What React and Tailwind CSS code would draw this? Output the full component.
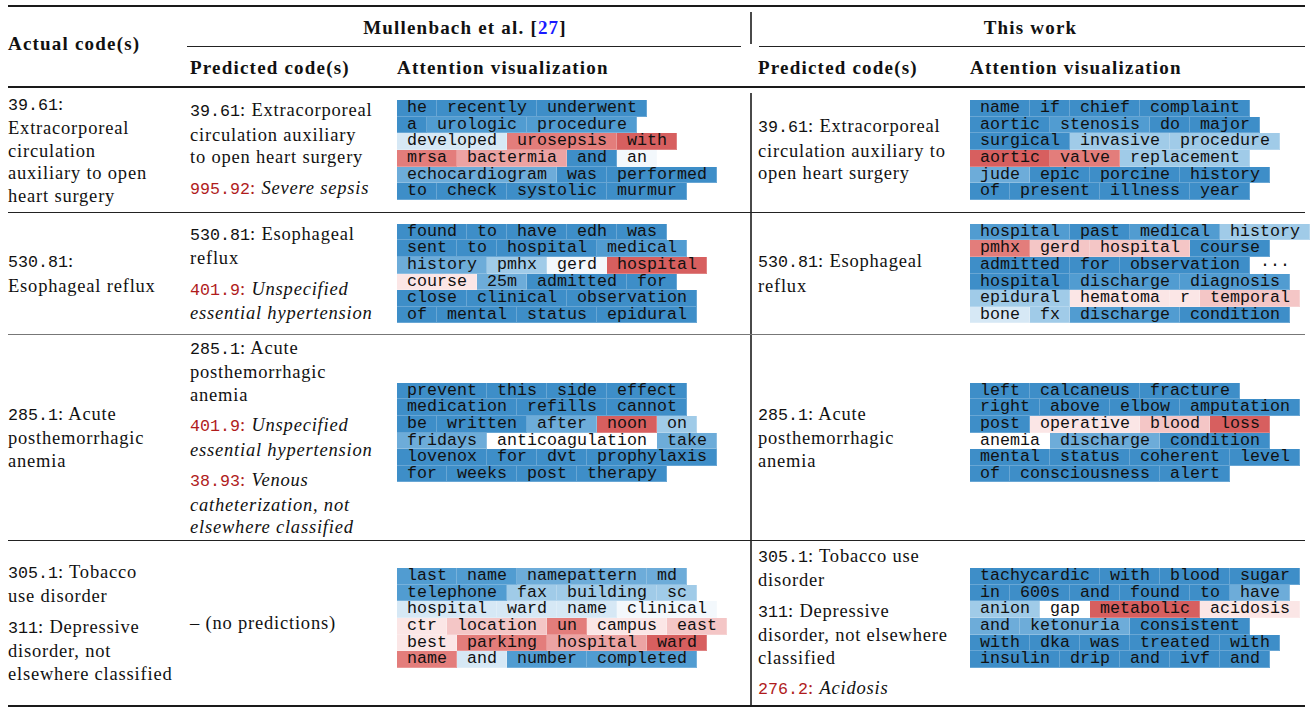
import React from 'react'

// ─── Fonts / colours ─────────────────────────────────────────
const serif = "font-['Liberation_Serif',serif]"
const mono = "font-['Liberation_Mono',monospace]"

const BG = {
  b4: 'bg-[#3e8ec8]',
  b3: 'bg-[#519cd1]',
  b2: 'bg-[#6dacd9]',
  b1: 'bg-[#a0cbe8]',
  b0: 'bg-[#d6e8f5]',
  w: 'bg-[#f3f8fc]',
  ww: 'bg-[#ffffff]',
  r0: 'bg-[#fbe6e6]',
  r1: 'bg-[#f4c6c6]',
  r2: 'bg-[#eca3a3]',
  r3: 'bg-[#e37d7b]',
  r4: 'bg-[#d75f5f]',
  no: 'bg-transparent',
}

// ─── Attention data ──────────────────────────────────────────
const ATTN = {
  m1: [
    'he:b4 recently:b4 underwent:b4',
    'a:b4 urologic:b3 procedure:b3',
    'developed:b0 urosepsis:r3 with:r4',
    'mrsa:r3 bactermia:r2 and:b4 an:w',
    'echocardiogram:b2 was:b4 performed:b4',
    'to:b4 check:b4 systolic:b4 murmur:b4',
  ],
  t1: [
    'name:b4 if:b4 chief:b4 complaint:b4',
    'aortic:b4 stenosis:b3 do:b4 major:b4',
    'surgical:b4 invasive:b1 procedure:b1',
    'aortic:r4 valve:r3 replacement:b1',
    'jude:b2 epic:b4 porcine:b4 history:b4',
    'of:b4 present:b4 illness:b4 year:b4',
  ],
  m2: [
    'found:b4 to:b4 have:b4 edh:b4 was:b4',
    'sent:b4 to:b4 hospital:b4 medical:b3',
    'history:b2 pmhx:b1 gerd:w hospital:r4',
    'course:r0 25m:b2 admitted:b4 for:b4',
    'close:b4 clinical:b4 observation:b4',
    'of:b4 mental:b4 status:b4 epidural:b4',
  ],
  t2: [
    'hospital:b3 past:b4 medical:b3 history:b1',
    'pmhx:r3 gerd:r1 hospital:r1 course:b4',
    'admitted:b4 for:b4 observation:b4 ···:no',
    'hospital:b4 discharge:b3 diagnosis:b3',
    'epidural:b1 hematoma:r0 r:r0 temporal:r1',
    'bone:b0 fx:b1 discharge:b3 condition:b4',
  ],
  m3: [
    'prevent:b4 this:b4 side:b4 effect:b4',
    'medication:b4 refills:b4 cannot:b4',
    'be:b4 written:b4 after:b2 noon:r4 on:b1',
    'fridays:b2 anticoagulation:ww take:b2',
    'lovenox:b4 for:b4 dvt:b4 prophylaxis:b4',
    'for:b4 weeks:b4 post:b4 therapy:b4',
  ],
  t3: [
    'left:b4 calcaneus:b4 fracture:b4',
    'right:b4 above:b4 elbow:b4 amputation:b4',
    'post:b4 operative:r0 blood:r1 loss:r4',
    'anemia:ww discharge:b2 condition:b4',
    'mental:b4 status:b4 coherent:b4 level:b4',
    'of:b4 consciousness:b4 alert:b4',
  ],
  m4: [
    'last:b3 name:b3 namepattern:b2 md:b2',
    'telephone:b3 fax:b1 building:b1 sc:b1',
    'hospital:b0 ward:b0 name:b0 clinical:w',
    'ctr:r0 location:r1 un:r3 campus:r0 east:r1',
    'best:r0 parking:r3 hospital:r2 ward:r4',
    'name:r3 and:b0 number:b3 completed:b3',
  ],
  t4: [
    'tachycardic:b4 with:b4 blood:b4 sugar:b4',
    'in:b4 600s:b4 and:b4 found:b4 to:b4 have:b2',
    'anion:b1 gap:ww metabolic:r4 acidosis:r0',
    'and:b2 ketonuria:b2 consistent:b4',
    'with:b4 dka:b4 was:b4 treated:b4 with:b4',
    'insulin:b4 drip:b4 and:b4 ivf:b4 and:b4',
  ],
}

// ─── Sub-components ──────────────────────────────────────────
function Attn({ lines }) {
  return (
    <div className={`${mono} text-[16.67px] tracking-normal text-[#111]`}>
      {lines.map((line, i) => (
        <div key={i} className="flex h-[16.67px]">
          {line.split(' ').map((tok, j) => {
            const [w, c] = tok.split(':')
            return (
              <span
                key={j}
                className={`${BG[c]} h-[16.67px] leading-[16.67px] px-[10px] whitespace-pre ${
                  c === 'no' ? '' : 'shadow-[inset_-1px_-1px_0_rgba(255,255,255,0.22)]'
                }`}
              >
                {w}
              </span>
            )
          })}
        </div>
      ))}
    </div>
  )
}

function Code({ c, red }) {
  return (
    <>
      <span className={`${mono} text-[16.67px] tracking-normal ${red ? 'text-[#b01c1c]' : ''}`}>{c}</span>
      <span className={red ? 'text-[#b01c1c]' : ''}>:</span>{' '}
    </>
  )
}

// one block of text, lines given explicitly
function Para({ code, red, lines, className = '' }) {
  return (
    <div className={className}>
      {lines.map((l, i) => (
        <div key={i} className="whitespace-nowrap">
          {i === 0 && code && <Code c={code} red={red} />}
          {red ? <i>{l}</i> : l}
        </div>
      ))}
    </div>
  )
}

function Cell({ w, pl, children }) {
  return (
    <div className={`${w} ${pl} flex flex-col justify-center`}>
      {children}
    </div>
  )
}

function VLine({ className = '' }) {
  return (
    <div className={`w-[10px] flex justify-center ${className}`}>
      <div className="w-[2px] bg-[#4a4a4a]" />
    </div>
  )
}

function Row({ h, actual, mPred, mAttn, tPred, tAttn, vTop = '' }) {
  return (
    <div className={`flex ${h}`}>
      <Cell w="w-[176px]" pl="pl-0">{actual}</Cell>
      <Cell w="w-[206px]" pl="pl-[6px]">{mPred}</Cell>
      <Cell w="w-[356px]" pl="pl-[7px]">{mAttn}</Cell>
      <VLine className={vTop} />
      <Cell w="w-[208px]" pl="pl-[2px]">{tPred}</Cell>
      <Cell w="w-[341px]" pl="pl-[6px]">{tAttn}</Cell>
    </div>
  )
}

// ─── Main ────────────────────────────────────────────────────
export default function App() {
  return (
    <div className={`${serif} bg-white w-[1313px] h-[714px] overflow-hidden text-[18.5px] leading-[22.5px] tracking-[0.8px] text-[#111] pt-[5px] pl-[8px]`}>
      <div className="w-[1297px]">
        <div className="h-[2px] bg-[#1a1a1a]" />

        {/* header */}
        <div className="flex h-[79px] font-bold text-[19px] tracking-[1.2px]">
          <div className="w-[176px] flex items-center pb-[5px]">Actual code(s)</div>
          <div className="flex-1 flex flex-col">
            <div className="flex h-[40px]">
              <div className="w-[562px] flex flex-col">
                <div className="flex-1 flex items-center justify-center pt-[3px]">
                  <span>
                    Mullenbach et al. [<span className="text-[#1a1aff]">27</span>]
                  </span>
                </div>
                <div className="h-[1.5px] bg-[#222] ml-[3px] mr-[5px]" />
              </div>
              <VLine className="pt-[5px] pb-[3px]" />
              <div className="flex-1 flex flex-col">
                <div className="flex-1 flex items-center justify-center pt-[3px]">This work</div>
                <div className="h-[1.5px] bg-[#222] ml-[3px]" />
              </div>
            </div>
            <div className="flex h-[39px] items-center pt-[3px]">
              <div className="w-[206px] pl-[6px]">Predicted code(s)</div>
              <div className="w-[356px] pl-[7px]">Attention visualization</div>
              <VLine className="self-stretch opacity-0" />
              <div className="w-[208px] pl-[2px]">Predicted code(s)</div>
              <div className="w-[341px] pl-[6px]">Attention visualization</div>
            </div>
          </div>
        </div>
        <div className="h-[2px] bg-[#1a1a1a]" />

        <Row
          h="h-[124px]"
          vTop="pt-[5px]"
          actual={<Para code="39.61" lines={['', 'Extracorporeal', 'circulation', 'auxiliary to open', 'heart surgery']} />}
          mPred={
            <>
              <Para code="39.61" lines={['Extracorporeal', 'circulation auxiliary', 'to open heart surgery']} />
              <Para className="mt-[8px]" code="995.92" red lines={['Severe sepsis']} />
            </>
          }
          mAttn={<Attn lines={ATTN.m1} />}
          tPred={<Para code="39.61" lines={['Extracorporeal', 'circulation auxiliary to', 'open heart surgery']} />}
          tAttn={<Attn lines={ATTN.t1} />}
        />
        <div className="h-[1px] bg-[#222]" />

        <Row
          h="h-[121px]"
          actual={<Para code="530.81" lines={['', 'Esophageal reflux']} />}
          mPred={
            <>
              <Para code="530.81" lines={['Esophageal', 'reflux']} />
              <Para className="mt-[8px]" code="401.9" red lines={['Unspecified', 'essential hypertension']} />
            </>
          }
          mAttn={<Attn lines={ATTN.m2} />}
          tPred={<Para code="530.81" lines={['Esophageal', 'reflux']} />}
          tAttn={<Attn lines={ATTN.t2} />}
        />
        <div className="h-[1px] bg-[#777]" />

        <Row
          h="h-[205px]"
          actual={<Para code="285.1" lines={['Acute', 'posthemorrhagic', 'anemia']} />}
          mPred={
            <>
              <Para code="285.1" lines={['Acute', 'posthemorrhagic', 'anemia']} />
              <Para className="mt-[8px]" code="401.9" red lines={['Unspecified', 'essential hypertension']} />
              <Para className="mt-[8px]" code="38.93" red lines={['Venous', 'catheterization, not', 'elsewhere classified']} />
            </>
          }
          mAttn={<div className="-mt-[10px]"><Attn lines={ATTN.m3} /></div>}
          tPred={<Para code="285.1" lines={['Acute', 'posthemorrhagic', 'anemia']} />}
          tAttn={<div className="-mt-[10px]"><Attn lines={ATTN.t3} /></div>}
        />
        <div className="h-[1px] bg-[#222]" />

        <Row
          h="h-[164px]"
          actual={
            <>
              <Para code="305.1" lines={['Tobacco', 'use disorder']} />
              <Para className="mt-[8px]" code="311" lines={['Depressive', 'disorder, not', 'elsewhere classified']} />
            </>
          }
          mPred={<div className="whitespace-nowrap">– (no predictions)</div>}
          mAttn={<div className="-mt-[10px]"><Attn lines={ATTN.m4} /></div>}
          tPred={
            <>
              <Para code="305.1" lines={['Tobacco use', 'disorder']} />
              <Para className="mt-[8px]" code="311" lines={['Depressive', 'disorder, not elsewhere', 'classified']} />
              <Para className="mt-[8px]" code="276.2" red lines={['Acidosis']} />
            </>
          }
          tAttn={<div className="-mt-[10px]"><Attn lines={ATTN.t4} /></div>}
        />
        <div className="h-[2px] bg-[#1a1a1a]" />
      </div>
    </div>
  )
}
